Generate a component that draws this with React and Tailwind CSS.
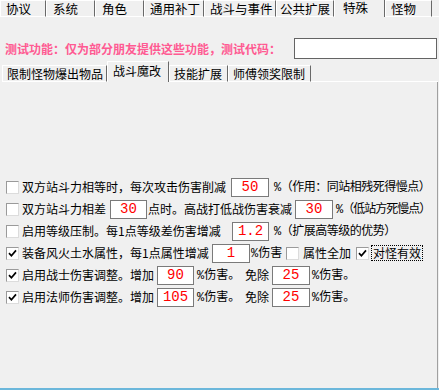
import React from "react";

const topTabs = [
  ["协议", 46, 5],
  ["系统", 49, 6],
  ["角色", 49, 6],
  ["通用补丁", 60, 5],
  ["战斗与事件", 72, 5],
  ["公共扩展", 58, 3],
  ["特殊", 51, 8, true],
  ["怪物", 47, 5],
];

const subTabs = [
  ["限制怪物爆出物品", 105],
  ["战斗魔改", 62, true],
  ["技能扩展", 59],
  ["师傅领奖限制", 83],
];

function Box({ checked }) {
  return (
    <span className="w-[13px] h-[13px] shrink-0 bg-white border border-[#9a9a9a] border-b-[#dcdcdc] border-r-[#dcdcdc] flex items-center justify-center">
      {checked && (
        <svg width="9" height="9" viewBox="0 0 9 9">
          <path d="M1 4.2 L3.4 6.8 L8 1.4" stroke="#000" strokeWidth="1.7" fill="none" />
        </svg>
      )}
    </span>
  );
}

function Num({ value, w }) {
  return (
    <input
      readOnly
      value={value}
      style={{ width: w }}
      className="h-[19px] shrink-0 border border-[#7a7a7a] bg-white text-center text-[#ff0000] text-[14px] font-['Liberation_Mono',monospace] outline-none leading-none"
    />
  );
}

function T({ children, w, className = "" }) {
  return (
    <span
      style={w ? { width: w } : undefined}
      className={`shrink-0 whitespace-nowrap leading-none ${className}`}
    >
      {children}
    </span>
  );
}

// half-width percent sign, like the bitmap font in the original
const P = () => <span className="font-['Liberation_Mono',monospace]">%</span>;

export default function App() {
  return (
    <div className="w-[439px] h-[390px] bg-[#f0f0f0] flex flex-col overflow-hidden text-black text-[12px] font-['Noto_Sans_CJK_SC',sans-serif]">
      {/* top tabs */}
      <div className="flex h-[17px] shrink-0">
        {topTabs.map(([name, w, pl, sel]) => (
          <div
            key={name}
            style={{ width: w, paddingLeft: pl }}
            className={`h-[17px] shrink-0 whitespace-nowrap border-l border-l-white border-r border-r-[#696969] text-[12.5px] leading-none ${
              sel ? "pt-[2px]" : "border-t border-t-white border-b border-b-white pt-[2px]"
            }`}
          >
            {name}
          </div>
        ))}
        <div className="flex-1 border-b border-b-white" />
      </div>

      {/* test code row */}
      <div className="flex items-center h-[21px] mt-[21px] shrink-0">
        <span className="pl-[5px] font-bold text-[#ff5a92] leading-none whitespace-nowrap">
          测试功能：仅为部分朋友提供这些功能，测试代码：
        </span>
        <div className="ml-auto mr-[2px] w-[143px] h-[21px] border border-[#646464] bg-white" />
      </div>

      {/* sub tabs */}
      <div className="flex items-end h-[21px] mt-[2px] pl-[2px] shrink-0">
        {subTabs.map(([name, w, sel]) => (
          <div
            key={name}
            style={{ width: w }}
            className={`shrink-0 whitespace-nowrap border-t border-t-white border-l border-l-white border-r border-r-[#696969] leading-none ${
              sel ? "h-[21px] pl-[5px] pt-[3px]" : "h-[17px] pl-[4px] pt-[2px] border-b border-b-white"
            }`}
          >
            {name}
          </div>
        ))}
        <div className="flex-1 h-full border-b border-b-white mr-[1px]" />
      </div>

      {/* panel */}
      <div className="flex-1 flex flex-col pt-[94px] mr-[1px] border-r border-r-[#a0a0a0]">
        <div className="flex items-center h-[22px] pl-[6px]">
          <Box />
          <T w={209} className="ml-[3px]">双方站斗力相等时，每次攻击伤害削减</T>
          <Num value="50" w={38} />
          <T className="pl-[5px] tracking-[-0.5px]"><P />（作用：同站相残死得慢点）</T>
        </div>

        <div className="flex items-center h-[22px] pl-[6px]">
          <Box />
          <T w={88} className="ml-[3px]">双方站斗力相差</T>
          <Num value="30" w={37} />
          <T w={148} className="pl-[1px]">点时。高战打低战伤害衰减</T>
          <Num value="30" w={38} />
          <T className="pl-[3px] tracking-[-1px]"><P />（低站方死慢点）</T>
        </div>

        <div className="flex items-center h-[22px] pl-[6px]">
          <Box />
          <T w={210} className="ml-[3px]">启用等级压制。每1点等级差伤害增减</T>
          <Num value="1.2" w={37} />
          <T className="pl-[5px] tracking-[-0.5px]"><P />（扩展高等级的优势）</T>
        </div>

        <div className="flex items-center h-[22px] pl-[6px]">
          <Box checked />
          <T w={190} className="ml-[3px]">装备风火土水属性，每1点属性增减</T>
          <Num value="1" w={38} />
          <T w={36} className="pl-[1px]"><P />伤害</T>
          <Box />
          <T w={57} className="pl-[4px]">属性全加</T>
          <Box checked />
          <T className="ml-[2px] px-[1px] py-[1px] border border-dotted border-black">对怪有效</T>
        </div>

        <div className="flex items-center h-[22px] pl-[6px]">
          <Box checked />
          <T w={135} className="ml-[3px]">启用战士伤害调整。增加</T>
          <Num value="90" w={37} />
          <T w={51} className="pl-[3px]"><P />伤害。</T>
          <T w={27}>免除</T>
          <Num value="25" w={38} />
          <T className="pl-[2px]"><P />伤害。</T>
        </div>

        <div className="flex items-center h-[22px] pl-[6px]">
          <Box checked />
          <T w={135} className="ml-[3px]">启用法师伤害调整。增加</T>
          <Num value="105" w={37} />
          <T w={51} className="pl-[3px]"><P />伤害。</T>
          <T w={27}>免除</T>
          <Num value="25" w={38} />
          <T className="pl-[2px]"><P />伤害。</T>
        </div>
      </div>

      <div className="h-[2px] shrink-0 bg-[#6bb7db]" />
    </div>
  );
}
